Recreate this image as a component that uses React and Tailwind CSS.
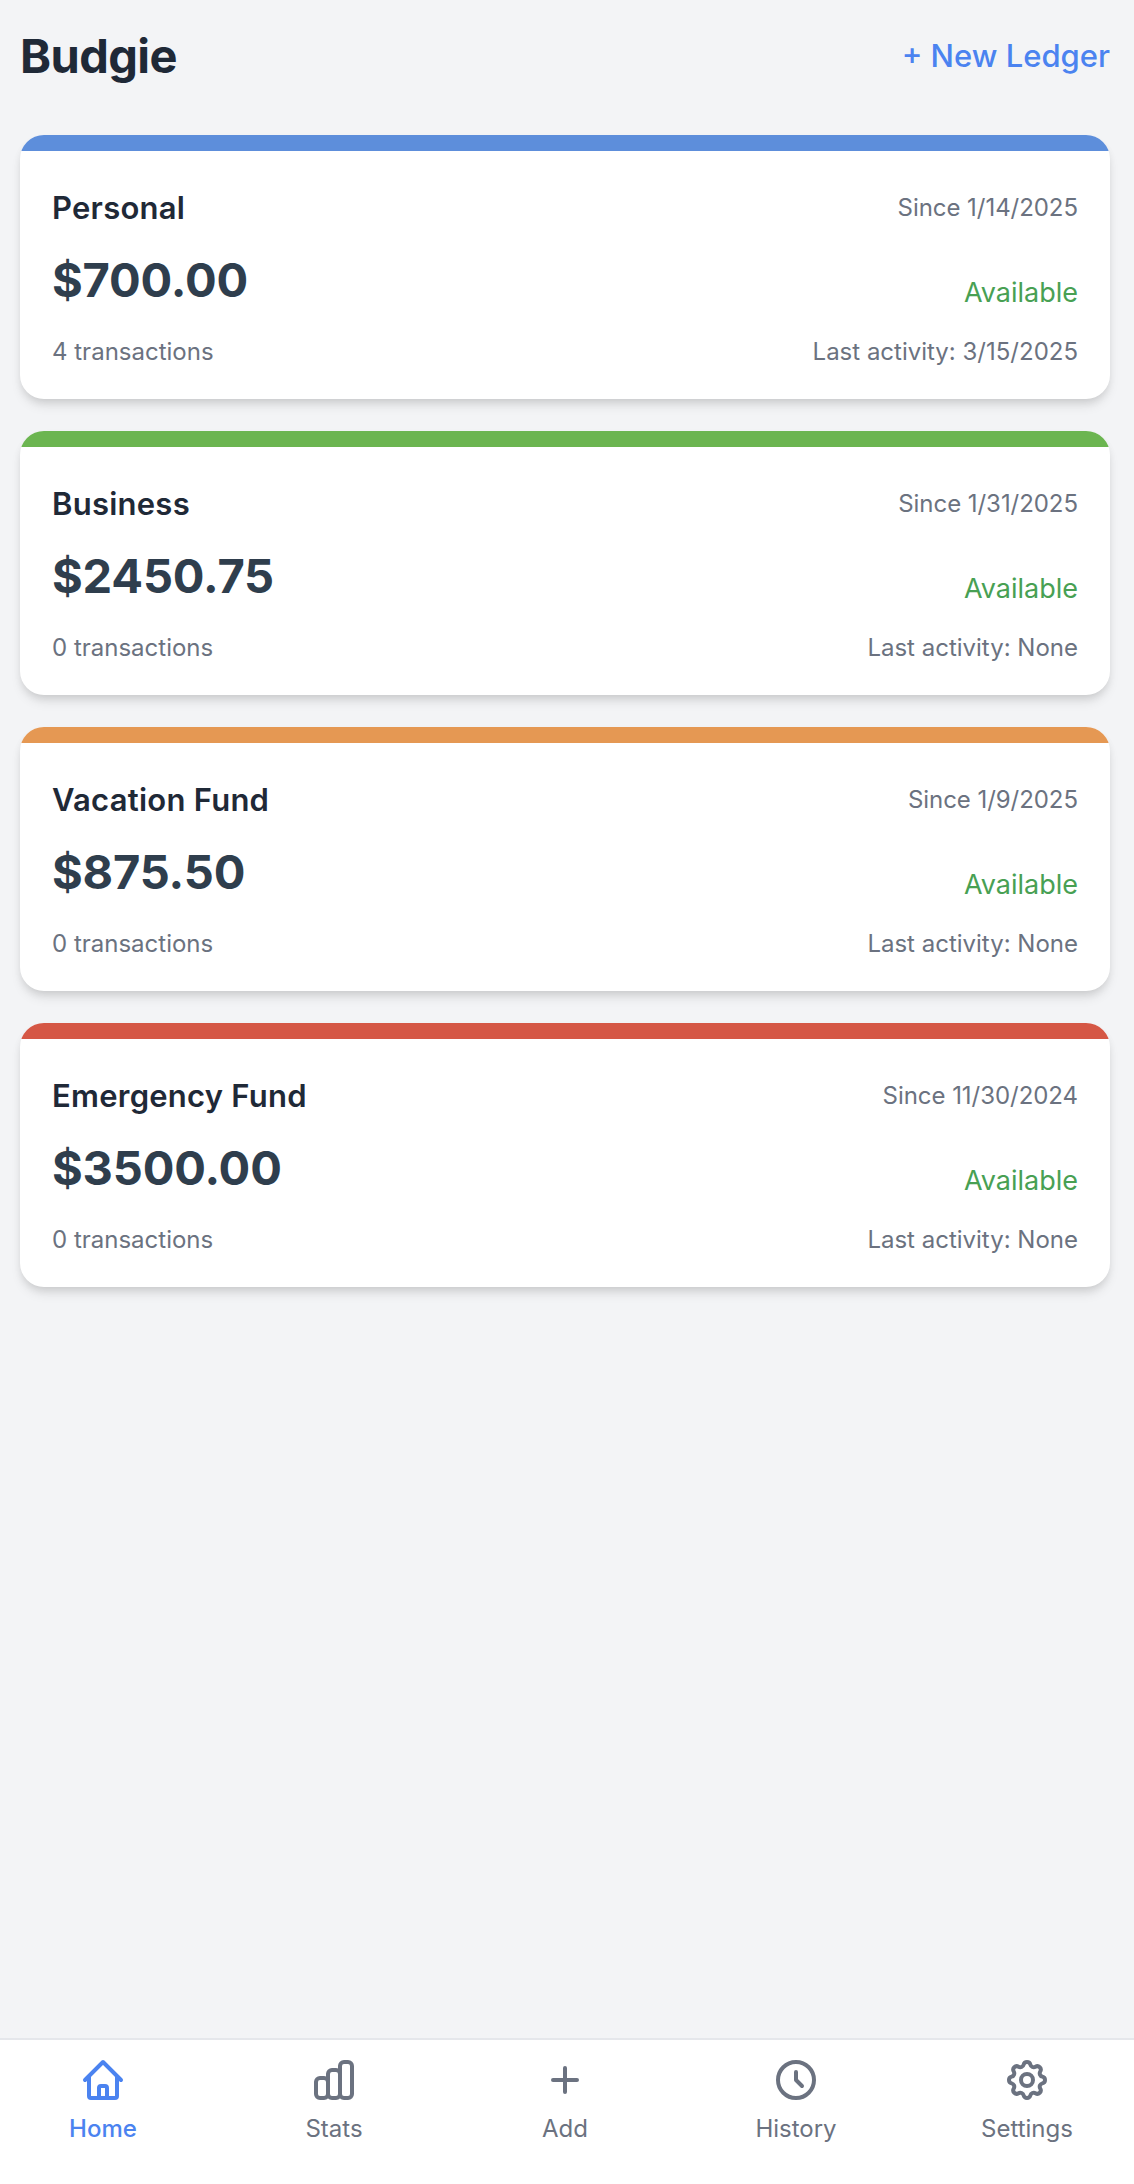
import React from "react";

const ledgers = [
  { name: "Personal", since: "1/14/2025", balance: "$700.00", count: 4, last: "3/15/2025", bar: "bg-[#5d8edb]" },
  { name: "Business", since: "1/31/2025", balance: "$2450.75", count: 0, last: "None", bar: "bg-[#6bb550]" },
  { name: "Vacation Fund", since: "1/9/2025", balance: "$875.50", count: 0, last: "None", bar: "bg-[#e59853]" },
  { name: "Emergency Fund", since: "11/30/2024", balance: "$3500.00", count: 0, last: "None", bar: "bg-[#d55745]" },
];

const tabs = [
  {
    label: "Home",
    active: true,
    paths: [
      "M3 12l2-2m0 0l7-7 7 7M5 10v10a1 1 0 001 1h3m10-11l2 2m-2-2v10a1 1 0 01-1 1h-3m-6 0a1 1 0 001-1v-4a1 1 0 011-1h2a1 1 0 011 1v4a1 1 0 001 1m-6 0h6",
    ],
  },
  {
    label: "Stats",
    paths: [
      "M9 19v-6a2 2 0 00-2-2H5a2 2 0 00-2 2v6a2 2 0 002 2h2a2 2 0 002-2zm0 0V9a2 2 0 012-2h2a2 2 0 012 2v10m-6 0a2 2 0 002 2h2a2 2 0 002-2m0 0V5a2 2 0 012-2h2a2 2 0 012 2v14a2 2 0 01-2 2h-2a2 2 0 01-2-2z",
    ],
  },
  { label: "Add", paths: ["M12 6v6m0 0v6m0-6h6m-6 0H6"] },
  { label: "History", paths: ["M12 8v4l3 3m6-3a9 9 0 11-18 0 9 9 0 0118 0z"] },
  {
    label: "Settings",
    paths: [
      "M10.325 4.317c.426-1.756 2.924-1.756 3.35 0a1.724 1.724 0 002.573 1.066c1.543-.94 3.31.826 2.37 2.37a1.724 1.724 0 001.065 2.572c1.756.426 1.756 2.924 0 3.35a1.724 1.724 0 00-1.066 2.573c.94 1.543-.826 3.31-2.37 2.37a1.724 1.724 0 00-2.572 1.065c-.426 1.756-2.924 1.756-3.35 0a1.724 1.724 0 00-2.573-1.066c-1.543.94-3.31-.826-2.37-2.37a1.724 1.724 0 00-1.065-2.572c-1.756-.426-1.756-2.924 0-3.35a1.724 1.724 0 001.066-2.573c-.94-1.543.826-3.31 2.37-2.37.996.608 2.296.07 2.572-1.065z",
      "M15 12a3 3 0 11-6 0 3 3 0 016 0z",
    ],
  },
];

function LedgerCard({ ledger }) {
  return (
    <article className="overflow-hidden rounded-3xl bg-white shadow-[0_8px_12px_-2px_rgba(0,0,0,0.1),0_4px_8px_-2px_rgba(0,0,0,0.1)]">
      <div className={"h-4 " + ledger.bar} />
      <div className="flex h-[248px] flex-col px-8 pt-[33px] pb-[31px]">
        <div className="flex h-12 items-center justify-between">
          <h2 className="text-[31px] leading-[48px] font-semibold tracking-[0.25px] text-[#1f2937]">{ledger.name}</h2>
          <span className="text-2xl tracking-[-0.05px] text-[#6b7280]">Since {ledger.since}</span>
        </div>
        <div className="mt-4 flex items-end justify-between">
          <span className="text-[47px] leading-[64px] font-bold tracking-[-0.15px] text-[#2f3e4d]">{ledger.balance}</span>
          <span className="text-[27px] leading-[38px] text-[#48a053]">Available</span>
        </div>
        <div className="mt-auto flex justify-between text-2xl text-[#6b7280]">
          <span>{ledger.count} transactions</span>
          <span>Last activity: {ledger.last}</span>
        </div>
      </div>
    </article>
  );
}

function Tab({ tab }) {
  return (
    <button className={"flex w-[126px] flex-col items-center " + (tab.active ? "font-medium text-[#4b83f0]" : "text-[#6b7280]")}>
      <svg className="size-12" viewBox="0 0 24 24" fill="none" stroke="currentColor" strokeWidth="2" strokeLinecap="round" strokeLinejoin="round">
        {tab.paths.map((d) => (
          <path key={d} d={d} />
        ))}
      </svg>
      <span className="mt-[9px] text-2xl">{tab.label}</span>
    </button>
  );
}

export default function App() {
  return (
    <div className="flex h-[2184px] w-[1134px] flex-col bg-[#f3f4f6] font-[Inter,sans-serif]">
      <header className="flex h-[135px] items-start justify-between pt-5 pr-6 pl-5">
        <h1 className="text-[47px] leading-[72px] font-bold tracking-[-0.6px] text-[#1f2937]">Budgie</h1>
        <button className="text-[31px] leading-[72px] font-medium text-[#4b83f0]">+ New Ledger</button>
      </header>
      <main className="flex flex-1 flex-col gap-8 pr-6 pl-5">
        {ledgers.map((ledger) => (
          <LedgerCard key={ledger.name} ledger={ledger} />
        ))}
      </main>
      <nav className="flex h-[146px] items-start justify-between border-t-2 border-[#e5e7eb] bg-white pt-4 pr-11 pl-10">
        {tabs.map((tab) => (
          <Tab key={tab.label} tab={tab} />
        ))}
      </nav>
    </div>
  );
}
